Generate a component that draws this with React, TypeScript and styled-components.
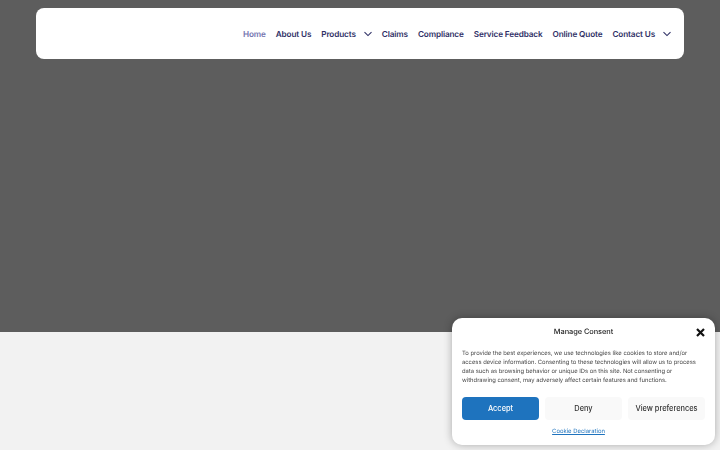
import { createGlobalStyle, styled } from 'styled-components';

const GlobalStyle = createGlobalStyle`
  html, body {
    margin: 0;
    padding: 0;
    height: 100%;
    overflow: hidden;
    background: #f2f2f2;
    font-family: Inter, "Noto Sans", sans-serif;
    text-rendering: geometricPrecision;
  }
`;

const Page = styled.div`
  width: 720px;
  height: 450px;
  display: flex;
  flex-direction: column;
`;

const Hero = styled.section`
  height: 332px;
  box-sizing: border-box;
  padding: 8px 36px 0;
  background: #5d5d5d;
`;

const Header = styled.header`
  height: 51px;
  box-sizing: border-box;
  padding-right: 13px;
  display: flex;
  justify-content: flex-end;
  align-items: center;
  background: #fff;
  border-radius: 8px;
`;

const Nav = styled.nav`
  display: flex;
  align-items: center;
  gap: 10px;
`;

const NavLink = styled.a<{ $active?: boolean }>`
  display: flex;
  align-items: center;
  gap: 8px;
  font-size: 8.2px;
  letter-spacing: -0.13px;
  font-weight: 600;
  line-height: 12px;
  color: ${p => (p.$active ? '#7475b0' : '#2f3066')};
  white-space: nowrap;
  cursor: pointer;
`;

const Chevron = styled.svg`
  width: 8px;
  height: 6px;
  fill: none;
  stroke: #2f3066;
  stroke-width: 1.1;
`;

const Rest = styled.main`
  flex: 1;
  background: #f2f2f2;
`;

const Consent = styled.aside`
  position: fixed;
  right: 5px;
  bottom: 5px;
  width: 263px;
  height: 127px;
  box-sizing: border-box;
  padding: 0 10px;
  display: flex;
  flex-direction: column;
  background: #fff;
  border-radius: 10px;
  box-shadow: 0 0 8px rgba(0, 0, 0, 0.3);
`;

const ConsentHead = styled.div`
  position: relative;
  height: 27px;
  display: flex;
  justify-content: center;
  align-items: center;
`;

const ConsentTitle = styled.div`
  font-size: 7.4px;
  letter-spacing: -0.05px;
  font-weight: 500;
  color: #222;
`;

const Close = styled.svg`
  position: absolute;
  right: 0;
  top: 10px;
  width: 9px;
  height: 9px;
  stroke: #111;
  stroke-width: 2.2;
`;

const ConsentText = styled.p`
  margin: 4px 0 0;
  font-size: 5.85px;
  line-height: 9.1px;
  white-space: nowrap;
  color: #444;
`;

const Buttons = styled.div`
  margin-top: 12px;
  display: grid;
  grid-template-columns: 77px 77px 77px;
  justify-content: space-between;
`;

const ConsentButton = styled.button<{ $primary?: boolean }>`
  height: 23px;
  padding: 0;
  border: 0;
  border-radius: 4px;
  font-family: inherit;
  font-size: 7.4px;
  font-weight: 500;
  color: ${p => (p.$primary ? '#fff' : '#333')};
  background: ${p => (p.$primary ? '#1e73be' : '#f9f9f9')};
`;

const Declaration = styled.a`
  margin-top: 8px;
  align-self: center;
  margin-right: 10px;
  font-size: 5.9px;
  color: #1e73be;
  text-decoration: underline;
`;

export default function App() {
  return (
    <>
      <GlobalStyle />
      <Page>
        <Hero>
          <Header>
            <Nav>
              <NavLink $active>Home</NavLink>
              <NavLink>About Us</NavLink>
              <NavLink>
                Products
                <Chevron viewBox="0 0 8 6"><path d="M0.5 1.2 4 4.6 7.5 1.2" /></Chevron>
              </NavLink>
              <NavLink>Claims</NavLink>
              <NavLink>Compliance</NavLink>
              <NavLink>Service Feedback</NavLink>
              <NavLink>Online Quote</NavLink>
              <NavLink>
                Contact Us
                <Chevron viewBox="0 0 8 6"><path d="M0.5 1.2 4 4.6 7.5 1.2" /></Chevron>
              </NavLink>
            </Nav>
          </Header>
        </Hero>
        <Rest />
      </Page>
      <Consent>
        <ConsentHead>
          <ConsentTitle>Manage Consent</ConsentTitle>
          <Close viewBox="0 0 9 9"><path d="M1 1 8 8M8 1 1 8" /></Close>
        </ConsentHead>
        <ConsentText>
          To provide the best experiences, we use technologies like cookies to store and/or
          <br />
          access device information. Consenting to these technologies will allow us to process
          <br />
          data such as browsing behavior or unique IDs on this site. Not consenting or
          <br />
          withdrawing consent, may adversely affect certain features and functions.
        </ConsentText>
        <Buttons>
          <ConsentButton $primary>Accept</ConsentButton>
          <ConsentButton>Deny</ConsentButton>
          <ConsentButton>View preferences</ConsentButton>
        </Buttons>
        <Declaration>Cookie Declaration</Declaration>
      </Consent>
    </>
  );
}
